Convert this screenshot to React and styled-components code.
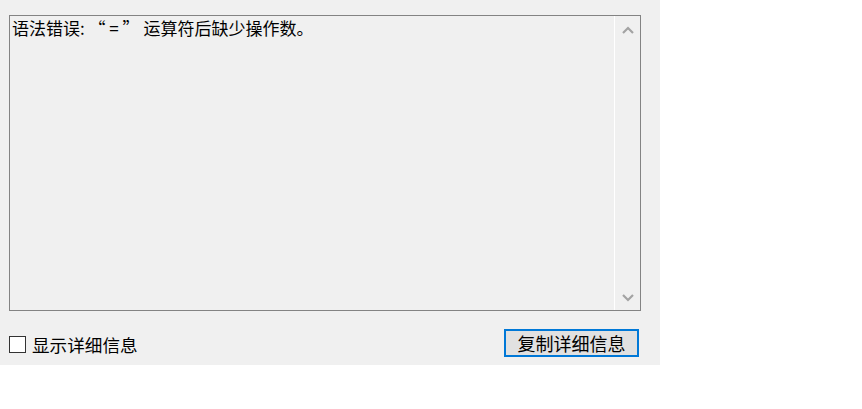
import React from "react";
import styled, { createGlobalStyle } from "styled-components";

const GlobalStyle = createGlobalStyle`
    html, body {
        margin: 0;
        padding: 0;
        background: #ffffff;
    }
    body {
        font-family: "Noto Sans CJK SC", "Noto Sans", sans-serif;
        color: #000000;
    }
`;

const Dialog = styled.div`
    width: 660px;
    height: 365px;
    box-sizing: border-box;
    background: #f0f0f0;
    padding: 15px 19px 0 9px;
    display: flex;
    flex-direction: column;
`;

const TextBox = styled.div`
    height: 296px;
    box-sizing: border-box;
    border: 1px solid #838383;
    display: flex;
    background: #f0f0f0;
`;

const Message = styled.div`
    flex: 1;
    padding: 1px 2px;
    font-size: 17px;
    line-height: 22px;
    white-space: pre;
`;

const ScrollBar = styled.div`
    width: 25px;
    border-left: 1px solid #ffffff;
    display: flex;
    flex-direction: column;
    justify-content: space-between;
    align-items: center;
    padding: 10px 0 8px;
`;

const Arrow = styled.svg`
    width: 12px;
    height: 8px;
    fill: none;
    stroke: #a3a3a3;
    stroke-width: 2.2;
`;

const BottomRow = styled.div`
    margin-top: 18px;
    display: flex;
    align-items: center;
    justify-content: space-between;
    padding-right: 2px;
    height: 28px;
`;

const CheckLabel = styled.label`
    display: flex;
    align-items: center;
    gap: 6px;
    font-size: 17.6px;
    margin-top: 2px;
`;

const Box = styled.span`
    width: 15px;
    height: 15px;
    border: 1px solid #333333;
    background: #ffffff;
`;

const Button = styled.button`
    width: 135px;
    height: 28px;
    box-sizing: border-box;
    border: 2px solid #0078d7;
    background: #e1e1e1;
    font-family: "Noto Sans CJK SC", "Noto Sans", sans-serif;
    font-size: 18px;
    color: #000000;
    padding: 0;
    line-height: 22px;
`;

export default function App() {
    return (
        <>
            <GlobalStyle />
            <Dialog>
                <TextBox>
                    <Message>语法错误: “ = ” 运算符后缺少操作数。</Message>
                    <ScrollBar>
                        <Arrow viewBox="0 0 12 8">
                            <polyline points="1,7 6,2 11,7" />
                        </Arrow>
                        <Arrow viewBox="0 0 12 8">
                            <polyline points="1,1 6,6 11,1" />
                        </Arrow>
                    </ScrollBar>
                </TextBox>
                <BottomRow>
                    <CheckLabel>
                        <Box />
                        显示详细信息
                    </CheckLabel>
                    <Button>复制详细信息</Button>
                </BottomRow>
            </Dialog>
        </>
    );
}
